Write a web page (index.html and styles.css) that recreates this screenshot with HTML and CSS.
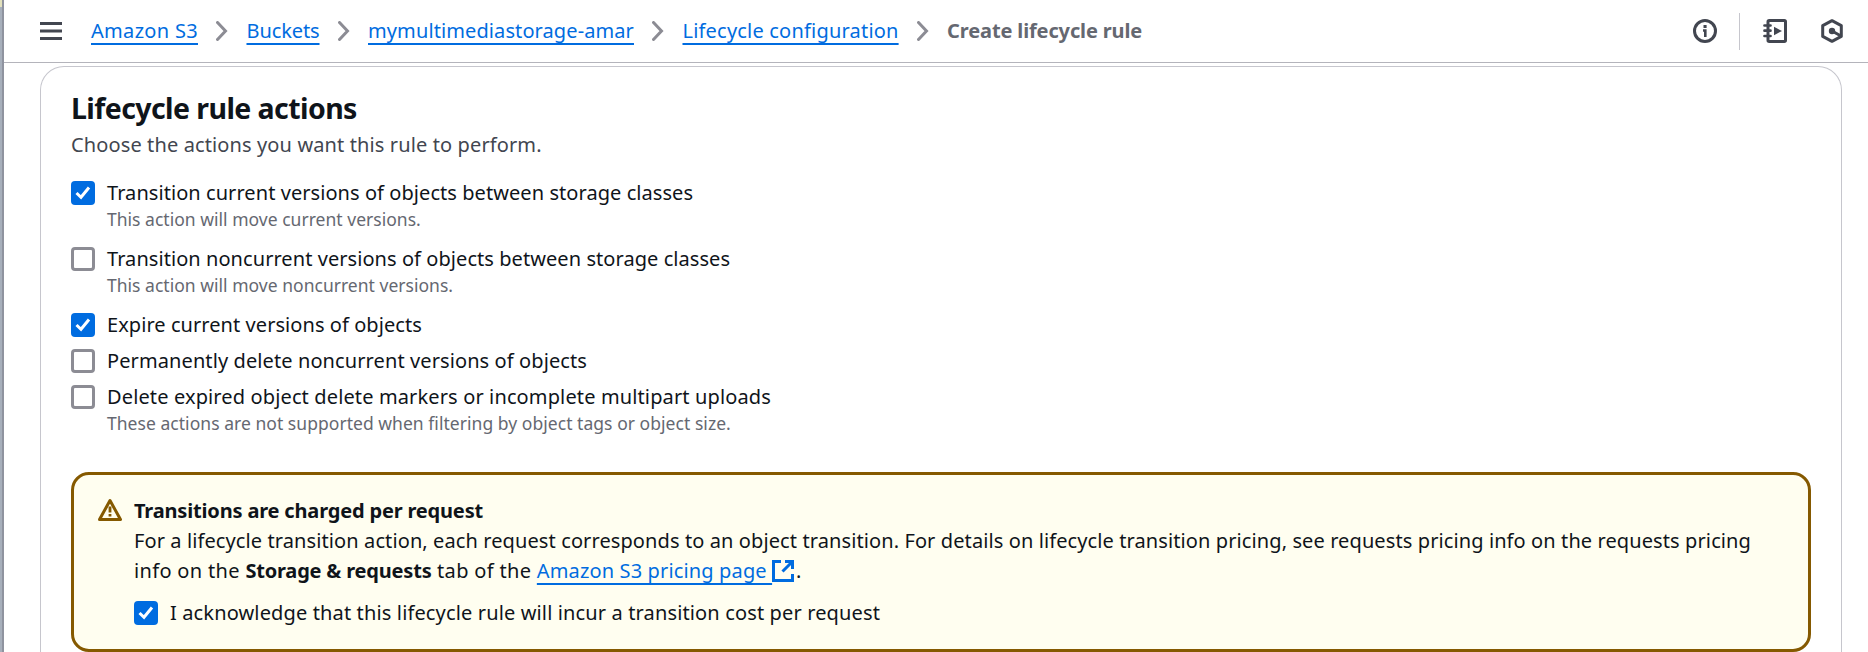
FILE: index.html
```html
<!DOCTYPE html>
<html lang="en">
<head>
<meta charset="utf-8">
<title>Create lifecycle rule</title>
<link rel="stylesheet" href="styles.css">
</head>
<body>
<svg class="defs" aria-hidden="true">
  <symbol id="chevron" viewBox="0 0 12 20"><path d="M1.500 1.500 9.500 10l-8 8.500" fill="none" stroke="#8c8c94" stroke-width="3" stroke-linecap="round" stroke-linejoin="miter"/></symbol>
  <symbol id="check" viewBox="0 0 24 24"><path d="M5.500 12 10 16.300 18 6.500" fill="none" stroke="#fff" stroke-width="3"/></symbol>
</svg>
<div class="app">
  <div class="edge"></div>
  <div class="main">
    <header class="topbar">
      <svg class="menu" viewBox="0 0 22 18"><path d="M0 1.500h22M0 9h22M0 16.500h22" stroke="#424650" stroke-width="3"/></svg>
      <nav class="crumbs">
        <a class="link c1">Amazon S3</a><svg class="chev"><use href="#chevron"/></svg>
        <a class="link c2">Buckets</a><svg class="chev"><use href="#chevron"/></svg>
        <a class="link c3">mymultimediastorage-amar</a><svg class="chev"><use href="#chevron"/></svg>
        <a class="link c4">Lifecycle configuration</a><svg class="chev"><use href="#chevron"/></svg>
        <span class="current">Create lifecycle rule</span>
      </nav>
      <div class="tools">
        <svg class="icon" viewBox="0 0 24 24" fill="none" stroke="#424650"><circle cx="12" cy="12" r="10.500" stroke-width="3"/><path d="M10 11.500h2.300V18" stroke-width="2.600"/><path d="M10.500 7.500h3.100" stroke-width="3"/></svg>
        <span class="divider"></span>
        <svg class="icon" viewBox="0 0 24 24" fill="none" stroke="#424650" stroke-width="3"><rect x="5" y="1.500" width="17.500" height="21" rx="1.200"/><path d="M1.500 6.500h6M1.500 11.700h6M1.500 17h6" stroke-linecap="round" stroke-width="2.700"/><path d="M11 7.800v8.400l8-4.200z" fill="#424650" stroke="none"/></svg>
        <svg class="icon hex" viewBox="0 0 24 24" fill="none" stroke="#424650" stroke-width="3"><path d="M12 1.700 21.300 6.600v10.800L12 22.300 2.700 17.400V6.600z" stroke-linejoin="round"/><circle cx="12" cy="12" r="3.200" fill="#424650" stroke="none"/><path d="m12 12 9 5"/></svg>
      </div>
    </header>
    <section class="panel">
      <h2 class="title">Lifecycle rule actions</h2>
      <p class="lead">Choose the actions you want this rule to perform.</p>
      <div class="options">
        <div class="option"><span class="box on"><svg><use href="#check"/></svg></span><div><div class="label o1">Transition current versions of objects between storage classes</div><div class="hint h1">This action will move current versions.</div></div></div>
        <div class="option"><span class="box"></span><div><div class="label o1">Transition noncurrent versions of objects between storage classes</div><div class="hint h1">This action will move noncurrent versions.</div></div></div>
        <div class="option"><span class="box on"><svg><use href="#check"/></svg></span><div class="label o1">Expire current versions of objects</div></div>
        <div class="option"><span class="box"></span><div class="label o4">Permanently delete noncurrent versions of objects</div></div>
        <div class="option"><span class="box"></span><div><div class="label o5">Delete expired object delete markers or incomplete multipart uploads</div><div class="hint h5">These actions are not supported when filtering by object tags or object size.</div></div></div>
      </div>
      <div class="alert">
        <svg class="warn" viewBox="0 0 24 24" fill="none" stroke="#855900"><path d="M12 2.500 22.500 21.500h-21z" stroke-width="3" stroke-linejoin="round"/><path d="M12 8.500v6M12 16v2.600" stroke-width="2.800"/></svg>
        <div class="message">
          <div class="alert-title">Transitions are charged per request</div>
          <div class="line">For a lifecycle transition action, each request corresponds to an object transition. For details on lifecycle transition pricing, see requests pricing info on the requests pricing</div>
          <div class="line"><span class="t1">info on the </span><b>Storage &amp; requests</b><span class="t2"> tab of the </span><a class="link c5">Amazon S3 pricing page </a><svg class="ext" viewBox="0 0 22 22" fill="none" stroke="#006ce0" stroke-width="3"><path d="M9 1.500H1.500v19h19V14M13 1.500h7.500V9M20 2 10.500 11.500"/></svg>.</div>
          <div class="option ack"><span class="box on"><svg><use href="#check"/></svg></span><div class="label o6">I acknowledge that this lifecycle rule will incur a transition cost per request</div></div>
        </div>
      </div>
    </section>
  </div>
</div>
</body>
</html>
```
FILE: styles.css
```css
* { box-sizing: border-box; }

body {
  margin: 0;
  background: #fff;
  color: #0f141a;
  font: 20px/30px "Noto Sans", "Open Sans", sans-serif;
  letter-spacing: 0.1px;
  white-space: nowrap;
  overflow: hidden;
}

.defs { display: none; }
.app { display: flex; height: 652px; }

.edge {
  flex: none;
  width: 4px;
  border-right: 2px solid #8f939f;
  background: linear-gradient(#e2e1bd 7px, #a7afbb 7px);
}

.main { flex: 1; display: flex; flex-direction: column; min-width: 0; }

.topbar {
  flex: none;
  display: flex;
  align-items: center;
  height: 63px;
  padding: 0 24px 0 36px;
  border-bottom: 1px solid #b4b4bb;
}
.menu { width: 22px; height: 18px; margin-right: 29px; }
.crumbs { display: flex; align-items: center; }
.chev { width: 12px; height: 20px; margin: 0 18px 0 18.500px; }

.link {
  color: #006ce0;
  text-decoration: underline 2px;
  text-underline-offset: 5px;
  text-decoration-skip-ink: none;
}
.c1 { letter-spacing: 0.31px; }
.c2 { letter-spacing: -0.1px; }
.c4 { letter-spacing: 0.2px; }
.c5 { letter-spacing: 0.14px; white-space: pre; }
.current { color: #656871; font-weight: 700; letter-spacing: -0.13px; }

.tools { display: flex; align-items: center; margin-left: auto; }
.icon { width: 24px; height: 24px; }
.divider { width: 1px; height: 37px; margin: 0 23px 0 22px; background: #c6c6cd; }
.hex { margin-left: 33px; }

.panel {
  flex: 1;
  width: 1802px;
  margin: 3px 0 0 36px;
  padding: 23px 30px 0;
  border: 1px solid #c6c6cd;
  border-bottom: 0;
  border-radius: 24px 24px 0 0;
}
.title { margin: 0; font-size: 28.5px; line-height: 36px; letter-spacing: -0.58px; }
.lead { margin: 4px 0 0; color: #424650; letter-spacing: 0.12px; }

.options { display: flex; flex-direction: column; gap: 6px; margin-top: 18px; }
.option { display: flex; gap: 12px; }
.box {
  flex: none;
  width: 24px;
  height: 24px;
  margin-top: 3px;
  border: 3px solid #8c8c94;
  border-radius: 4px;
  background: #fff;
}
.box.on { border: 0; background: #006ce0; }
.box svg { display: block; width: 24px; height: 24px; }
.hint {
  padding-bottom: 8px;
  color: #656871;
  font-size: 17.5px;
  line-height: 22px;
}
.h1 { letter-spacing: 0.02px; }
.h5 { letter-spacing: 0.04px; }
.o1 { letter-spacing: 0.063px; }
.o5 { letter-spacing: 0.13px; }
.o6 { letter-spacing: 0.138px; }

.alert {
  display: flex;
  gap: 12px;
  height: 180px;
  margin-top: 30px;
  padding: 21px 24px 0;
  border: 3px solid #855900;
  border-radius: 18px;
  background: #fffef0;
}
.warn { flex: none; width: 24px; height: 24px; margin-top: 2px; }
.alert-title { font-weight: 700; letter-spacing: -0.174px; }
.line { letter-spacing: 0.102px; }
.line b { letter-spacing: -0.19px; }
.t1, .t2 { letter-spacing: 0.33px; white-space: pre; }
.ext { width: 22px; height: 22px; margin-right: 2px; vertical-align: -4px; }
.ack { margin-top: 12px; }
```
